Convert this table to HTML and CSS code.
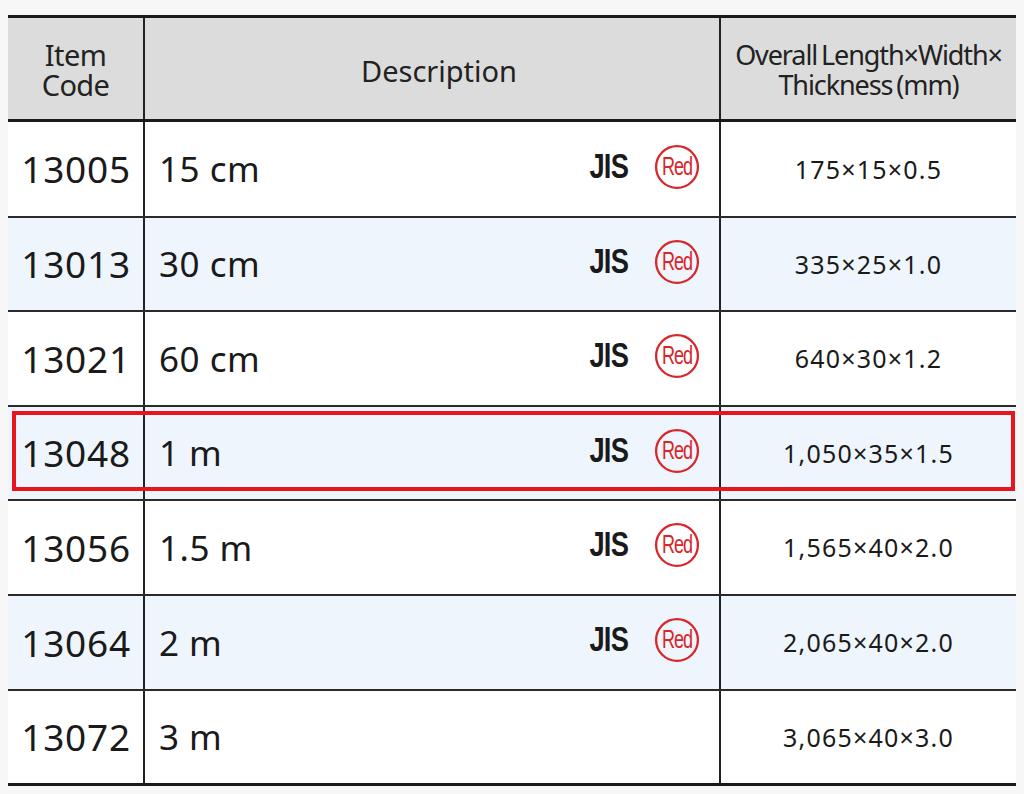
FILE: index.html
```html
<!DOCTYPE html>
<html>
<head>
<meta charset="utf-8">
<link rel="stylesheet" href="styles.css">
</head>
<body>
<div class="wrap">
<table class="spec">
  <colgroup><col class="c1"><col class="c2"><col class="c3"></colgroup>
  <thead>
    <tr>
      <th class="code-h"><span class="hl1">Item</span><span class="hl2">Code</span></th>
      <th class="desc-h">Description</th>
      <th class="dim-h"><span class="hl1">Overall Length×Width×</span><span class="hl2">Thickness (mm)</span></th>
    </tr>
  </thead>
  <tbody>
    <tr class="r1"><td class="code">13005</td><td class="desc"><div class="dflex"><span class="size">15 cm</span><span class="jis">JIS</span><svg class="red" viewBox="0 0 44 44"><circle cx="22" cy="22" r="20" /><text x="22" y="30" text-anchor="middle">Red</text></svg></div></td><td class="dim">175×15×0.5</td></tr>
    <tr class="r2 alt"><td class="code">13013</td><td class="desc"><div class="dflex"><span class="size">30 cm</span><span class="jis">JIS</span><svg class="red" viewBox="0 0 44 44"><circle cx="22" cy="22" r="20" /><text x="22" y="30" text-anchor="middle">Red</text></svg></div></td><td class="dim">335×25×1.0</td></tr>
    <tr class="r3"><td class="code">13021</td><td class="desc"><div class="dflex"><span class="size">60 cm</span><span class="jis">JIS</span><svg class="red" viewBox="0 0 44 44"><circle cx="22" cy="22" r="20" /><text x="22" y="30" text-anchor="middle">Red</text></svg></div></td><td class="dim">640×30×1.2</td></tr>
    <tr class="r4 alt hl"><td class="code">13048</td><td class="desc"><div class="dflex"><span class="size">1 m</span><span class="jis">JIS</span><svg class="red" viewBox="0 0 44 44"><circle cx="22" cy="22" r="20" /><text x="22" y="30" text-anchor="middle">Red</text></svg></div></td><td class="dim">1,050×35×1.5<div class="highlight"></div></td></tr>
    <tr class="r5"><td class="code">13056</td><td class="desc"><div class="dflex"><span class="size">1.5 m</span><span class="jis">JIS</span><svg class="red" viewBox="0 0 44 44"><circle cx="22" cy="22" r="20" /><text x="22" y="30" text-anchor="middle">Red</text></svg></div></td><td class="dim">1,565×40×2.0</td></tr>
    <tr class="r6 alt"><td class="code">13064</td><td class="desc"><div class="dflex"><span class="size">2 m</span><span class="jis">JIS</span><svg class="red" viewBox="0 0 44 44"><circle cx="22" cy="22" r="20" /><text x="22" y="30" text-anchor="middle">Red</text></svg></div></td><td class="dim">2,065×40×2.0</td></tr>
    <tr class="r7 last"><td class="code">13072</td><td class="desc"><div class="dflex"><span class="size">3 m</span></div></td><td class="dim">3,065×40×3.0</td></tr>
  </tbody>
</table>
</div>
</body>
</html>
```
FILE: styles.css
```css
html, body {
  margin: 0;
  padding: 0;
  background: #f7f7f7;
}
body {
  width: 1024px;
  height: 794px;
  overflow: hidden;
  font-family: "Noto Sans", "Open Sans", sans-serif;
  color: #1a1a1a;
}
.wrap {
  padding: 15px 0 0 8px;
  position: relative;
}
.spec {
  border-collapse: collapse;
  table-layout: fixed;
  width: 1008px;
  background: #fff;
  position: relative;
}
.c1 { width: 136px; }
.c2 { width: 576px; }
.c3 { width: 296px; }
.spec thead tr {
  height: 104px;
}
.spec th {
  background: #dcdcdc;
  font-weight: normal;
  color: #222;
  border-top: 3px solid #1a1a1a;
  border-bottom: 3px solid #1a1a1a;
  padding: 0;
  vertical-align: middle;
}
.spec th + th, .spec td + td {
  border-left: 2px solid #222;
}
.hl1, .hl2 {
  display: block;
  white-space: nowrap;
  height: 30px;
  line-height: 30px;
}
.code-h {
  font-size: 29px;
  letter-spacing: -0.6px;
  padding-top: 2px !important;
}
.desc-h {
  font-size: 29px;
  padding: 4px 0 0 14px !important;
}
.dim-h {
  font-size: 27px;
  letter-spacing: -1.1px;
  word-spacing: -2px;
  padding-top: 2px !important;
}
.spec td {
  padding: 0;
  border-bottom: 2px solid #2a2a2a;
  vertical-align: middle;
}
.spec tr.alt td {
  background: #eef5fc;
}
.spec tr.last td {
  border-bottom: 3px solid #1a1a1a;
}
.r1 { height: 96px; }
.r2 { height: 94px; }
.r3 { height: 95px; }
.r4 { height: 94px; }
.r5 { height: 95px; }
.r6 { height: 95px; }
.r7 { height: 95px; }
.code {
  font-size: 37px;
  letter-spacing: 0.8px;
  text-align: right;
  padding-right: 12px !important;
}
.desc {
  padding: 0 0 0 14px !important;
}
.dflex {
  display: flex;
  align-items: center;
}
.size {
  font-size: 35px;
  letter-spacing: 0.5px;
  flex: 1;
}
.jis {
  font-family: "Liberation Sans", sans-serif;
  font-weight: bold;
  font-size: 35px;
  letter-spacing: -1px;
  transform: scaleX(0.78);
  margin-right: 20px;
  padding-bottom: 6px;
}
.red {
  width: 46px;
  height: 46px;
  margin-right: 19px;
  margin-top: -4px;
}
.red circle {
  fill: none;
  stroke: #d8262a;
  stroke-width: 2.2;
}
.red text {
  fill: #d8262a;
  font-family: "Liberation Sans", sans-serif;
  font-size: 24px;
  letter-spacing: -1.5px;
  transform-origin: 22px 22px;
  transform: scaleX(0.72);
}
.dim {
  text-align: center;
  font-size: 25px;
  letter-spacing: 1.2px;
  position: relative;
}
.highlight {
  position: absolute;
  left: -709px;
  top: 4px;
  width: 1003px;
  height: 80px;
  box-sizing: border-box;
  border: 4px solid #e8141e;
  pointer-events: none;
}
```
